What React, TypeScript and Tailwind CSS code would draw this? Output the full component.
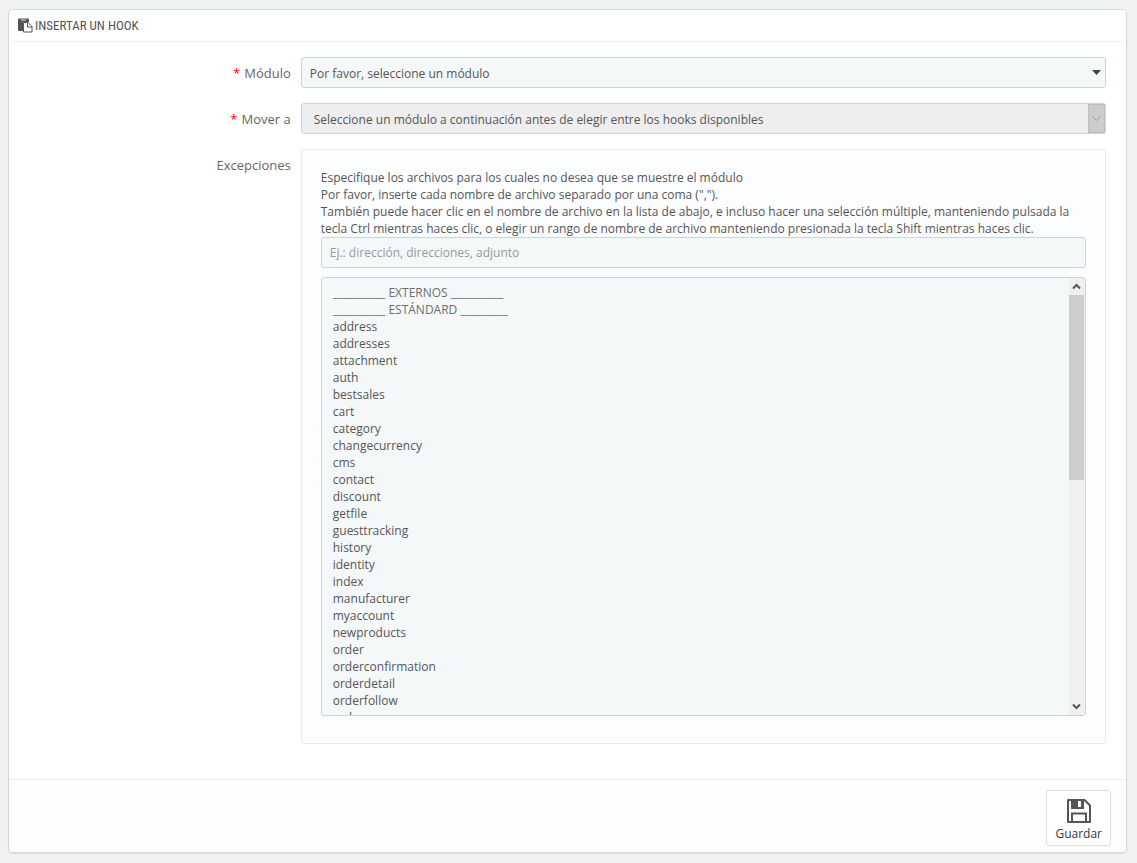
const files = [
  'address', 'addresses', 'attachment', 'auth', 'bestsales', 'cart', 'category', 'changecurrency', 'cms',
  'contact', 'discount', 'getfile', 'guesttracking', 'history', 'identity', 'index', 'manufacturer',
  'myaccount', 'newproducts', 'order', 'orderconfirmation', 'orderdetail', 'orderfollow', 'orderopc',
  'orderreturn', 'orderslip', 'pagenotfound', 'parentorder', 'password', 'pdfinvoice', 'pdforderreturn',
  'pdforderslip', 'pricesdrop', 'product', 'productscomparison', 'search', 'sitemap', 'statistics',
  'stores', 'supplier', 'cashondelivery', 'bankwire', 'cheque', 'blocknewsletter', 'blockwishlist',
  'favoriteproducts', 'loyalty', 'mailalerts', 'referralprogram', 'sendtoafriend', 'verification',
];

const field = 'block w-full rounded-[3px] border border-[#c7d6db] bg-[#f5f8f9] text-xs text-[#555]';

function PasteIcon() {
  return (
    <svg className="h-[15px] w-[15px] shrink-0" viewBox="0 0 15 15" aria-hidden="true">
      <path d="M0 1.500Q0 .5 1 .5h9q1 0 1 1V4H5v9H1q-1 0-1-1z" fill="#555" />
      <path d="M3 2h5" stroke="#ddd" strokeWidth="1" />
      <path d="M5.500 4.500h4.500L14 8.500v5.500H5.500z" fill="#fff" stroke="#555" />
      <path d="M9.500 4.500v4.500H14" fill="none" stroke="#555" />
    </svg>
  );
}

function SaveIcon() {
  return (
    <svg className="h-6 w-[26px]" viewBox="0 0 26 24" aria-hidden="true">
      <path d="M2 1h16.500L24 6.500V23H2z" fill="none" stroke="#555" strokeWidth="2" strokeLinejoin="round" />
      <path fillRule="evenodd" d="M5 1h13v9H5zM12 2v6h3V2z" fill="#555" />
      <path d="M6 23v-8.500h14V23" fill="none" stroke="#555" strokeWidth="2" />
    </svg>
  );
}

function ScrollArrow({ down }: { down?: boolean }) {
  return (
    <svg className="h-[17px] w-4 shrink-0" viewBox="0 0 16 17" aria-hidden="true">
      <path d={down ? 'M4 6.500l3.500 3.500L11 6.500' : 'M4 10.500L7.500 7l3.500 3.500'} fill="none" stroke="#555" strokeWidth="2" />
    </svg>
  );
}

function Label({ htmlFor, required, children }: { htmlFor: string; required?: boolean; children: string }) {
  return (
    <label htmlFor={htmlFor} className="w-1/4 shrink-0 px-[5px] pt-2 text-right text-[13px] leading-[17px] text-[#666]">
      {required && <span className="mr-1 text-[#f00]">*</span>}
      {children}
    </label>
  );
}

export default function App() {
  return (
    <div className="min-h-screen bg-[#eff1f2] px-2 pr-[10px] pt-[9px] pb-[10px] font-['Open_Sans',sans-serif] text-xs leading-[17px] text-[#555]">
      <form className="overflow-hidden rounded-[5px] border border-[#d3d8db] bg-white shadow-[0_1px_1px_rgba(0,0,0,0.08)]">
        <h1 className="mx-1 flex h-8 items-center gap-[2px] border-b border-[#eee] pl-[5px] font-['Ubuntu_Condensed','Roboto_Condensed','Open_Sans_Condensed','Liberation_Sans_Narrow',sans-serif] text-[13px] uppercase">
          <PasteIcon />
          Insertar un hook
        </h1>

        <div className="flex flex-col gap-[15px] px-[15px] pt-[15px] pb-[35px]">
          <div className="flex">
            <Label htmlFor="module" required>Módulo</Label>
            <div className="relative min-w-0 flex-1 px-[5px]">
              <select id="module" className={`${field} h-[31px] appearance-none px-2 pt-[2px]`}>
                <option>Por favor, seleccione un módulo</option>
              </select>
              <svg className="pointer-events-none absolute top-[13px] right-[10px] h-[5px] w-[9px]" viewBox="0 0 9 5" aria-hidden="true">
                <path d="M0 0h9L4.500 5z" fill="#444" />
              </svg>
            </div>
          </div>

          <div className="flex">
            <Label htmlFor="hook" required>Mover a</Label>
            <div className="relative min-w-0 flex-1 px-[5px]">
              <select id="hook" disabled className="block h-[31px] w-full appearance-none rounded-[3px] border border-[#c7d6db] bg-[#eee] pt-[2px] pr-6 pl-3 text-xs text-[#555] opacity-100">
                <option>Seleccione un módulo a continuación antes de elegir entre los hooks disponibles</option>
              </select>
              <span className="pointer-events-none absolute top-px right-[6px] flex h-[29px] w-[17px] items-center justify-center border border-[#bfbfbf] bg-[#ccc]">
                <svg className="h-[5px] w-[9px]" viewBox="0 0 9 5" aria-hidden="true">
                  <path d="M.5 .5l4 4 4-4" fill="none" stroke="#999" />
                </svg>
              </span>
            </div>
          </div>

          <div className="flex">
            <Label htmlFor="exceptions">Excepciones</Label>
            <div className="min-w-0 flex-1 px-[5px]">
              <div className="rounded-[3px] border border-[#e1e9f0] bg-[#fcfdfe] px-[19px] pt-[19px] pb-[27px]">
                <p>
                  Especifique los archivos para los cuales no desea que se muestre el módulo<br />
                  Por favor, inserte cada nombre de archivo separado por una coma (",").<br />
                  También puede hacer clic en el nombre de archivo en la lista de abajo, e incluso hacer una selección múltiple, manteniendo pulsada la tecla Ctrl mientras haces clic, o elegir un rango de nombre de archivo manteniendo presionada la tecla Shift mientras haces clic.
                </p>
                <input id="exceptions" type="text" placeholder="Ej.: dirección, direcciones, adjunto" className={`${field} h-[31px] px-2 placeholder:text-[#999]`} />
                <div className="mt-[9px] flex h-[439px] overflow-hidden rounded-[3px] border border-[#c7d6db] bg-[#f5f8f9]">
                  <select
                    multiple
                    aria-label="Lista de archivos"
                    className="h-full min-w-0 flex-1 overflow-y-scroll py-[6px] pl-2 text-xs leading-[17px] text-[#555] [scrollbar-width:none]"
                  >
                    <option disabled className="px-[3px] py-0 leading-[17px] text-[#6d6d6d]">__________ EXTERNOS __________</option>
                    <option disabled className="px-[3px] py-0 leading-[17px] text-[#6d6d6d]">__________ ESTÁNDARD _________</option>
                    {files.map((file) => (
                      <option key={file} className="px-[3px] py-0 leading-[17px]">{file}</option>
                    ))}
                  </select>
                  <div className="flex w-4 shrink-0 flex-col bg-[#f0f0f0]" aria-hidden="true">
                    <ScrollArrow />
                    <div className="flex-1">
                      <div className="mr-px h-[46%] bg-[#cdcdcd]" />
                    </div>
                    <ScrollArrow down />
                  </div>
                </div>
              </div>
            </div>
          </div>
        </div>

        <footer className="flex justify-end border-t border-[#eee] bg-[#fcfdfe] px-[15px] pt-[10px] pb-[6px]">
          <button type="submit" className="flex h-14 flex-col items-center gap-[2px] rounded-[3px] border border-[#ddd] bg-white px-2 pt-2 text-[#363a41]">
            <SaveIcon />
            <span className="text-xs leading-[17px]">Guardar</span>
          </button>
        </footer>
      </form>
    </div>
  );
}
